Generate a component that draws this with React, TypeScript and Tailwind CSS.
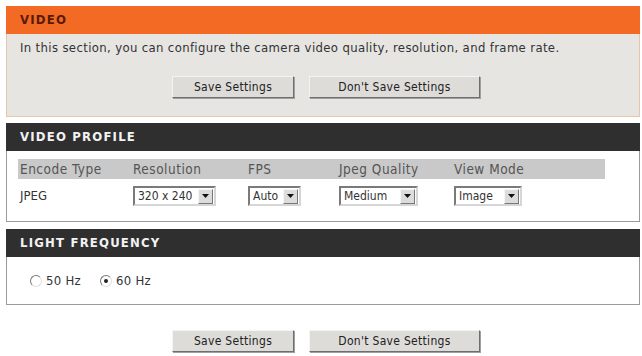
const font = "font-['DejaVu_Sans_Condensed','DejaVu_Sans',sans-serif]";

const Btn = ({ label, w }: { label: string; w: string }) => (
  <button
    className={`${w} h-[22px] bg-[#dedcd9] border border-t-[#f4f4f4] border-l-[#f4f4f4] border-r-[#6e6e6e] border-b-[#6e6e6e] text-[12px] tracking-[0.3px] text-[#222] shadow-[1px_1px_0_#a0a0a0]`}
  >
    {label}
  </button>
);

const Select = ({ value, w }: { value: string; w: string }) => (
  <div
    className={`${w} h-[20px] flex items-center bg-white border-2 border-t-[#7a7a7a] border-l-[#7a7a7a] border-r-[#d6d6d6] border-b-[#d6d6d6] text-[12px] text-[#333]`}
  >
    <span className="flex-1 pl-[3px] leading-none whitespace-nowrap">{value}</span>
    <span className="w-[15px] h-[15px] mr-[1px] bg-[#dcdcdc] border border-t-[#f6f6f6] border-l-[#f6f6f6] border-r-[#777] border-b-[#777] flex items-center justify-center">
      <svg width="7" height="4" viewBox="0 0 7 4">
        <path d="M0 0h7L3.5 4z" fill="#111" />
      </svg>
    </span>
  </div>
);

const Radio = ({ checked, label }: { checked?: boolean; label: string }) => (
  <label className="flex items-center gap-[4px] text-[13px] tracking-[0.3px] text-[#333]">
    <span className="w-[12px] h-[12px] rounded-full bg-white border border-t-[#777] border-l-[#777] border-r-[#e0e0e0] border-b-[#e0e0e0] flex items-center justify-center">
      {checked && <span className="w-[4px] h-[4px] rounded-full bg-[#222]" />}
    </span>
    {label}
  </label>
);

const DarkHeader = ({ title }: { title: string }) => (
  <div className="h-[28px] bg-[#2f2f2f] flex items-center pl-[14px] text-[13px] font-bold tracking-[1.2px] text-[#f2f2f2]">
    {title}
  </div>
);

const cols = "grid grid-cols-[113px_115px_91px_115px_1fr] items-center";

export default function App() {
  return (
    <div className={`w-[642px] h-[356px] bg-white pt-[6px] pl-[6px] pr-[2px] ${font}`}>
      {/* video */}
      <div className="h-[28px] bg-[#f26a24] flex items-center pl-[14px] text-[13px] font-bold tracking-[1.2px] text-[#561b06]">
        VIDEO
      </div>
      <div className="h-[83px] bg-[#e7e5e2] border border-t-0 border-[#e6c6a6] pt-[4px]">
        <p className="pl-[13px] text-[13px] tracking-[0.35px] text-[#333] whitespace-nowrap">
          In this section, you can configure the camera video quality, resolution, and frame rate.
        </p>
        <div className="flex gap-[15px] pl-[165px] mt-[18px]">
          <Btn label="Save Settings" w="w-[122px]" />
          <Btn label="Don't Save Settings" w="w-[171px]" />
        </div>
      </div>

      {/* video profile */}
      <div className="mt-[6px]">
        <DarkHeader title="VIDEO PROFILE" />
        <div className="h-[71px] bg-white border border-t-0 border-[#9a9a9a] pt-[8px] pl-[11px]">
          <div className={`w-[587px] h-[20px] bg-[#c9c9c9] ${cols} text-[13.5px] tracking-[0.5px] text-[#555]`}>
            <span className="pl-[2px]">Encode Type</span>
            <span className="pl-[2px]">Resolution</span>
            <span className="pl-[2px]">FPS</span>
            <span className="pl-[2px]">Jpeg Quality</span>
            <span className="pl-[2px]">View Mode</span>
          </div>
          <div className={`mt-[7px] ${cols} text-[13px] text-[#333]`}>
            <span className="pl-[2px]">JPEG</span>
            <div className="pl-[2px]">
              <Select value="320 x 240" w="w-[83px]" />
            </div>
            <div className="pl-[2px]">
              <Select value="Auto" w="w-[53px]" />
            </div>
            <div className="pl-[2px]">
              <Select value="Medium" w="w-[79px]" />
            </div>
            <div className="pl-[2px]">
              <Select value="Image" w="w-[68px]" />
            </div>
          </div>
        </div>
      </div>

      {/* light frequency */}
      <div className="mt-[7px]">
        <DarkHeader title="LIGHT FREQUENCY" />
        <div className="h-[48px] bg-white border border-t-0 border-[#9a9a9a] flex items-center gap-[19px] pl-[23px]">
          <Radio label="50 Hz" />
          <Radio checked label="60 Hz" />
        </div>
      </div>

      <div className="flex gap-[15px] pl-[166px] mt-[25px]">
        <Btn label="Save Settings" w="w-[122px]" />
        <Btn label="Don't Save Settings" w="w-[171px]" />
      </div>
    </div>
  );
}
